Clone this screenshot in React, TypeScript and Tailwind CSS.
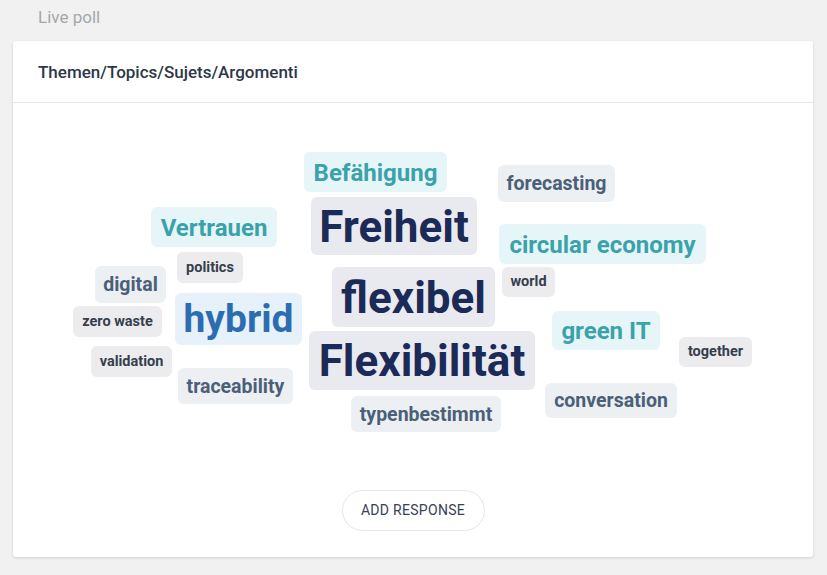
import React from "react";

type Word = {
  text: string;
  x: number;
  y: number;
  w: number;
  h: number;
  kind: "navy" | "blue" | "teal" | "slate" | "small";
};

const kinds: Record<Word["kind"], string> = {
  navy: "bg-[#e9eaef] text-[#1b2a57] text-[44px] rounded-md",
  blue: "bg-[#e6f1f9] text-[#2c6db1] text-[39px] rounded-md",
  teal: "bg-[#e6f6f8] text-[#3aa2ab] text-[24px] rounded-md",
  slate: "bg-[#edf0f3] text-[#4b5f78] text-[19.5px] rounded-md",
  small: "bg-[#ececee] text-[#363e4c] text-[14.5px] rounded-md",
};

// word cloud: placement is the content
const words: Word[] = [
  { text: "Befähigung", x: 291, y: 49, w: 143, h: 40, kind: "teal" },
  { text: "forecasting", x: 485, y: 62, w: 117, h: 37, kind: "slate" },
  { text: "Vertrauen", x: 138, y: 104, w: 126, h: 40, kind: "teal" },
  { text: "Freiheit", x: 298, y: 94, w: 166, h: 58, kind: "navy" },
  { text: "circular economy", x: 486, y: 121, w: 207, h: 40, kind: "teal" },
  { text: "politics", x: 164, y: 149, w: 66, h: 31, kind: "small" },
  { text: "digital", x: 82, y: 163, w: 71, h: 37, kind: "slate" },
  { text: "world", x: 489, y: 164, w: 53, h: 30, kind: "small" },
  { text: "flexibel", x: 319, y: 164, w: 163, h: 60, kind: "navy" },
  { text: "hybrid", x: 162, y: 190, w: 127, h: 52, kind: "blue" },
  { text: "zero waste", x: 60, y: 203, w: 89, h: 31, kind: "small" },
  { text: "green IT", x: 539, y: 208, w: 108, h: 39, kind: "teal" },
  { text: "Flexibilität", x: 296, y: 228, w: 226, h: 59, kind: "navy" },
  { text: "validation", x: 78, y: 243, w: 81, h: 31, kind: "small" },
  { text: "together", x: 666, y: 234, w: 73, h: 30, kind: "small" },
  { text: "traceability", x: 165, y: 265, w: 115, h: 36, kind: "slate" },
  { text: "conversation", x: 532, y: 280, w: 132, h: 35, kind: "slate" },
  { text: "typenbestimmt", x: 338, y: 293, w: 150, h: 36, kind: "slate" },
];

export default function App() {
  return (
    <main className="min-h-[575px] w-[827px] bg-[#f1f1f1] font-['Roboto','Liberation_Sans',sans-serif]">
      <div className="px-[38px] pt-[5px] h-[41px] text-[17px] text-[#a3a7ab]">Live poll</div>

      <div className="mx-[13px] w-[800px] rounded-[3px] bg-white shadow-[0_1px_3px_rgba(0,0,0,0.14)]">
        <div className="h-[62px] flex items-center pl-[25px] pt-[2px] border-b border-[#e6e6e6] text-[17px] font-medium text-[#2d3748]">
          Themen/Topics/Sujets/Argomenti
        </div>

        <div className="relative h-[372px]">
          {words.map((w) => (
            <div
              key={w.text}
              className={"absolute flex items-center justify-center pt-px font-bold whitespace-nowrap leading-none " + kinds[w.kind]}
              style={{ left: w.x, top: w.y, width: w.w, height: w.h }}
            >
              {w.text}
            </div>
          ))}
        </div>

        <div className="flex justify-center pt-[15px] pb-[26px]">
          <button className="h-[41px] w-[143px] rounded-full border border-[#e3e6ea] text-[14px] text-[#374255] tracking-[0.3px]">
            ADD RESPONSE
          </button>
        </div>
      </div>
    </main>
  );
}
